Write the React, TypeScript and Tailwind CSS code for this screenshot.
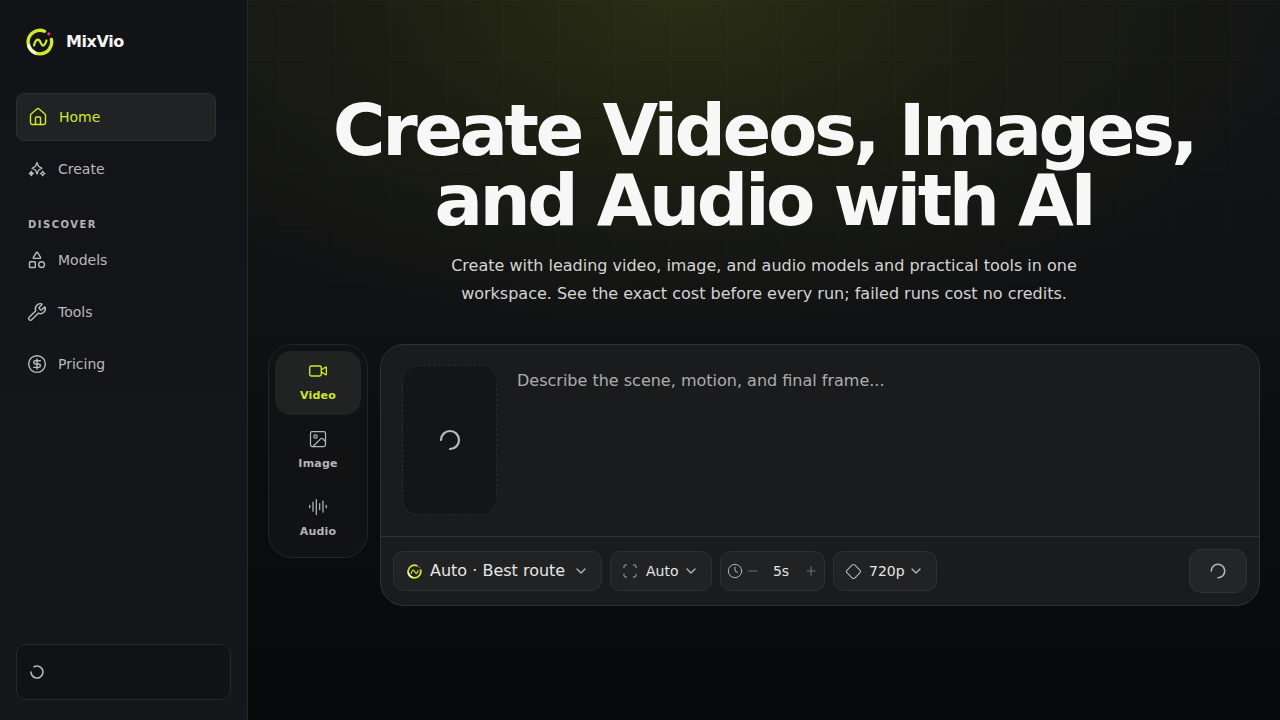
import React from 'react';
import {
  AudioLines,
  ChevronDown,
  CircleDollarSign,
  Clock,
  Diamond,
  House,
  Image,
  Minus,
  Plus,
  Scan,
  Shapes,
  Video,
  Wrench,
} from 'lucide-react';

const sans = "font-['DejaVu_Sans',sans-serif]";

const Logo = ({ size }: { size: number }) => (
  <svg width={size} height={size} viewBox="0 0 28 28" fill="none">
    <path d="M18.500 3.200A11.800 11.800 0 1 0 25.400 11.500" stroke="#cfe92c" strokeWidth="3.400" strokeLinecap="round" />
    <path d="M2.700 17.500A11.800 11.800 0 0 0 9 24.800" stroke="#f2f6cf" strokeWidth="3.400" strokeLinecap="round" />
    <path d="M8 17.500c1-4.500 3-7 5-5.500s2 6.500 4.500 5.500c1.500-.6 2.300-2.800 3-5" stroke="#cfe92c" strokeWidth="2.200" strokeLinecap="round" />
    <circle cx="22.800" cy="5.800" r="1.600" fill="#f0346b" />
  </svg>
);

const Spinner = ({ size, className }: { size: number; className?: string }) => (
  <svg width={size} height={size} viewBox="0 0 24 24" fill="none" className={className}>
    <path d="M3 12a9 9 0 1 1 9 9" stroke="currentColor" strokeWidth="2.200" strokeLinecap="round" />
  </svg>
);

const SparkleIcon = () => (
  <svg width="20" height="20" viewBox="0 0 20 20" fill="none" stroke="currentColor" strokeWidth="1.300" strokeLinejoin="round">
    <path d="M10 3.500 11.600 7.400 15 9.200 11.600 11 10 15 8.400 11 5 9.200 8.400 7.400z" />
    <path d="M15.700 12.200l.8 1.500 1.500.8-1.500.8-.8 1.500-.8-1.500-1.500-.8 1.500-.8z" />
    <path d="M4.300 12.400l.8 1.300 1.300.8-1.300.8-.8 1.300-.8-1.300-1.300-.8 1.300-.8z" fill="currentColor" />
  </svg>
);

const NavItem = ({ icon, label }: { icon: React.ReactNode; label: string }) => (
  <div className="flex h-[48px] items-center gap-[11px] pl-[11px] text-[14px] text-[#b9babb]">
    <span className="flex w-[20px] justify-center">{icon}</span>
    {label}
  </div>
);

const ModeTab = ({ icon, label, active }: { icon: React.ReactNode; label: string; active?: boolean }) => (
  <div
    className={`flex h-[64px] w-[86px] flex-col items-center gap-[7px] rounded-[16px] pt-[10px] text-[11px] leading-[16px] font-bold tracking-[0.2px] ${
      active ? 'bg-[#212322] text-[#cfe92c]' : 'text-[#b4b5b6]'
    }`}
  >
    {icon}
    {label}
  </div>
);

const Chip = ({ children, className }: { children: React.ReactNode; className?: string }) => (
  <div
    className={`flex h-[40px] items-center rounded-[10px] border border-[#2e2f30] bg-[#212223] text-[#e6e6e6] ${className ?? ''}`}
  >
    {children}
  </div>
);

export default function App() {
  return (
    <div className={`flex h-[720px] w-[1280px] overflow-hidden bg-[#090a0c] ${sans}`}>
      <aside className="flex w-[248px] shrink-0 flex-col border-r border-[#26272a] bg-linear-to-b from-[#121316] to-[#16171a] pr-[16px] pl-[16px]">
        <div className="flex h-[84px] items-center gap-[12px] pl-[10px]">
          <Logo size={28} />
          <span className="text-[16px] font-bold tracking-[-0.4px] text-[#f5f5f5]">MixVio</span>
        </div>
        <div className="mt-[9px] flex h-[48px] w-[200px] items-center gap-[11px] rounded-[8px] border border-[#2e2f30] bg-[#212223] pl-[11px] text-[14px] text-[#cfe92c]">
          <House size={20} strokeWidth={1.700} />
          Home
        </div>
        <div className="mt-[4px]">
          <NavItem icon={<SparkleIcon />} label="Create" />
        </div>
        <div className="mt-[24px] mb-[4px] pl-[12px] text-[10px] font-bold tracking-[1.500px] text-[#b4b5b6]">DISCOVER</div>
        <div className="flex flex-col gap-[4px]">
          <NavItem icon={<Shapes size={20} strokeWidth={1.700} />} label="Models" />
          <NavItem icon={<Wrench size={20} strokeWidth={1.700} />} label="Tools" />
          <NavItem icon={<CircleDollarSign size={20} strokeWidth={1.700} />} label="Pricing" />
        </div>
        <div className="mt-auto mb-[20px] flex h-[56px] w-[215px] items-center rounded-[10px] border border-[#27282a] bg-[#111214] pl-[12px] text-[#b4b5b6]">
          <svg width="16" height="16" viewBox="0 0 24 24" fill="none" className="-rotate-[120deg]">
            <circle cx="12" cy="12" r="9" stroke="currentColor" strokeWidth="2.400" strokeLinecap="round" strokeDasharray="46 100" />
          </svg>
        </div>
      </aside>

      <main className="relative flex flex-1 flex-col items-center bg-[radial-gradient(ellipse_640px_340px_at_42%_0%,#2a2e14_0%,#1b1d12_50%,transparent_100%),linear-gradient(#131416_0%,#101113_45%,#0b0c0e_70%,#090a0b_100%)]">
        <div className="pointer-events-none absolute inset-0 bg-[linear-gradient(#ffffff06_1px,transparent_1px),linear-gradient(90deg,#ffffff06_1px,transparent_1px)] bg-[size:56px_56px] bg-[position:30px_0] [mask-image:linear-gradient(#000,transparent_60%)]" />
        <h1 className="relative mt-[95px] text-center text-[72px] leading-[70px] font-bold tracking-[-3.500px] text-[#f7f7f7]">
          Create Videos, Images,
          <br />
          and Audio with AI
        </h1>
        <p className="relative mt-[17px] text-center text-[16px] leading-[28px] text-[#d4d4d4]">
          Create with leading video, image, and audio models and practical tools in one
          <br />
          workspace. See the exact cost before every run; failed runs cost no credits.
        </p>

        <div className="relative mt-[36px] flex items-start gap-[12px] self-stretch px-[20px]">
          <div className="flex h-[214px] w-[100px] shrink-0 flex-col gap-[4px] rounded-[24px] border border-[#232425] bg-[#111214] p-[6px]">
            <ModeTab active icon={<Video size={20} strokeWidth={1.600} />} label="Video" />
            <ModeTab icon={<Image size={20} strokeWidth={1.500} />} label="Image" />
            <ModeTab icon={<AudioLines size={20} strokeWidth={1.500} />} label="Audio" />
          </div>

          <div className="flex h-[262px] flex-1 flex-col rounded-[24px] border border-[#303132] bg-[#1a1b1d]">
            <div className="flex h-[192px] border-b border-[#303132] pt-[20px] pl-[21px]">
              <div className="flex h-[150px] w-[95px] items-center justify-center rounded-[16px] border border-dashed border-[#2a2b2c] bg-[#141517] text-[#b9babb]">
                <Spinner size={24} />
              </div>
              <div className="ml-[20px] text-[16px] leading-[32px] text-[#adaeaf]">Describe the scene, motion, and final frame...</div>
            </div>
            <div className="flex flex-1 items-center gap-[8px] pr-[12px] pl-[12px]">
              <Chip className="w-[209px] pl-[13px] text-[16px]">
                <Logo size={15} />
                <span className="ml-[8px]">Auto · Best route</span>
                <ChevronDown size={16} className="ml-[8px] text-[#b4b5b6]" />
              </Chip>
              <Chip className="w-[102px] pl-[11px] text-[14px]">
                <Scan size={16} strokeWidth={1.500} className="text-[#b4b5b6]" />
                <span className="ml-[8px]">Auto</span>
                <ChevronDown size={16} className="ml-[4px] text-[#b4b5b6]" />
              </Chip>
              <Chip className="w-[105px] pl-[6px] text-[14px]">
                <Clock size={16} strokeWidth={1.500} className="text-[#b4b5b6]" />
                <Minus size={14} className="ml-[3px] text-[#6d6e6f]" />
                <span className="w-[42px] text-center">5s</span>
                <Plus size={14} className="ml-[2px] text-[#6d6e6f]" />
              </Chip>
              <Chip className="w-[104px] pl-[11px] text-[14px]">
                <Diamond size={17} strokeWidth={1.500} className="text-[#b9babb]" />
                <span className="ml-[7px]">720p</span>
                <ChevronDown size={16} className="ml-[3px] text-[#b4b5b6]" />
              </Chip>
              <div className="ml-auto flex h-[44px] w-[58px] items-center justify-center rounded-[12px] border border-[#303132] bg-[#242526] text-[#b4b5b6]">
                <Spinner size={18} />
              </div>
            </div>
          </div>
        </div>
      </main>
    </div>
  );
}
